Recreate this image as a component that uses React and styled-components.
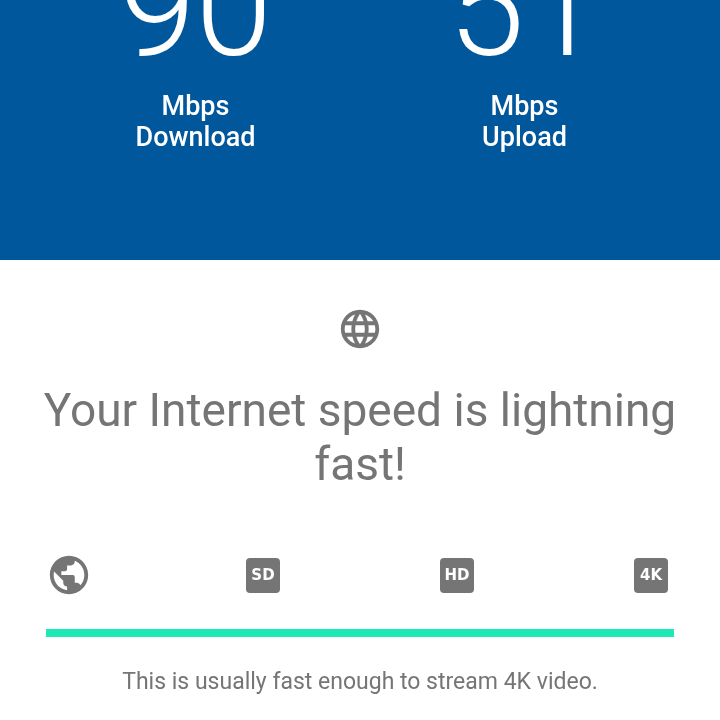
import styled, { createGlobalStyle } from 'styled-components';
import { MdLanguage, MdPublic } from 'react-icons/md';

const GlobalStyle = createGlobalStyle`
  html, body {
    margin: 0;
    height: 720px;
    overflow: hidden;
    background: #fff;
    font-family: Roboto, "Liberation Sans", sans-serif;
  }
`;

const Page = styled.div`
  width: 720px;
  height: 720px;
  display: flex;
  flex-direction: column;
  overflow: hidden;
`;

const Hero = styled.header`
  height: 260px;
  flex: none;
  background: #01579b;
  color: #fff;
  overflow: hidden;
  display: flex;
  flex-direction: column;
  justify-content: flex-end;
  padding: 0 31px 107px;
  box-sizing: border-box;
`;

const Speeds = styled.div`
  display: grid;
  grid-template-columns: 1fr 1fr;
  will-change: transform;
`;

const Speed = styled.div`
  display: flex;
  flex-direction: column;
  align-items: center;
  text-align: center;
`;

const Value = styled.div`
  font-size: 138px;
  font-weight: 300;
  line-height: 138px;
  margin-bottom: 14px;
`;

const Unit = styled.div`
  font-size: 27px;
  font-weight: 500;
  line-height: 31px;
`;

const Body = styled.main`
  flex: 1;
  display: flex;
  flex-direction: column;
  align-items: center;
  padding-top: 46px;
  color: #757575;
  will-change: transform;
`;

const Heading = styled.h1`
  margin: 31px 0 0;
  width: 660px;
  font-size: 46px;
  font-weight: 400;
  line-height: 54px;
  text-align: center;
`;

const Levels = styled.div`
  width: 630px;
  margin-top: 60px;
  display: flex;
  justify-content: space-between;
  align-items: center;
`;

const Level = styled.div`
  width: 48px;
  height: 48px;
  display: flex;
  align-items: center;
  justify-content: center;
`;

const Badge = styled.span`
  width: 34px;
  height: 35px;
  border-radius: 4px;
  background: #757575;
  color: #fff;
  display: flex;
  align-items: center;
  justify-content: center;
  font-family: "DejaVu Sans", sans-serif;
  font-size: 15px;
  font-weight: 700;
`;

const Meter = styled.div`
  width: 628px;
  height: 8px;
  margin-top: 30px;
  background: #1de9b6;
`;

const Note = styled.p`
  margin: 31px 0 0;
  font-size: 23px;
  line-height: 28px;
  text-align: center;
`;

const speeds = [
  { value: '90', label: 'Download' },
  { value: '51', label: 'Upload' },
];

export default function App() {
  return (
    <>
      <GlobalStyle />
      <Page>
        <Hero>
          <Speeds>
            {speeds.map((s) => (
              <Speed key={s.label}>
                <Value>{s.value}</Value>
                <Unit>Mbps</Unit>
                <Unit>{s.label}</Unit>
              </Speed>
            ))}
          </Speeds>
        </Hero>
        <Body>
          <MdLanguage size={46} />
          <Heading>Your Internet speed is lightning fast!</Heading>
          <Levels>
            <Level>
              <MdPublic size={46} />
            </Level>
            <Level>
              <Badge>SD</Badge>
            </Level>
            <Level>
              <Badge>HD</Badge>
            </Level>
            <Level>
              <Badge>4K</Badge>
            </Level>
          </Levels>
          <Meter />
          <Note>This is usually fast enough to stream 4K video.</Note>
        </Body>
      </Page>
    </>
  );
}
